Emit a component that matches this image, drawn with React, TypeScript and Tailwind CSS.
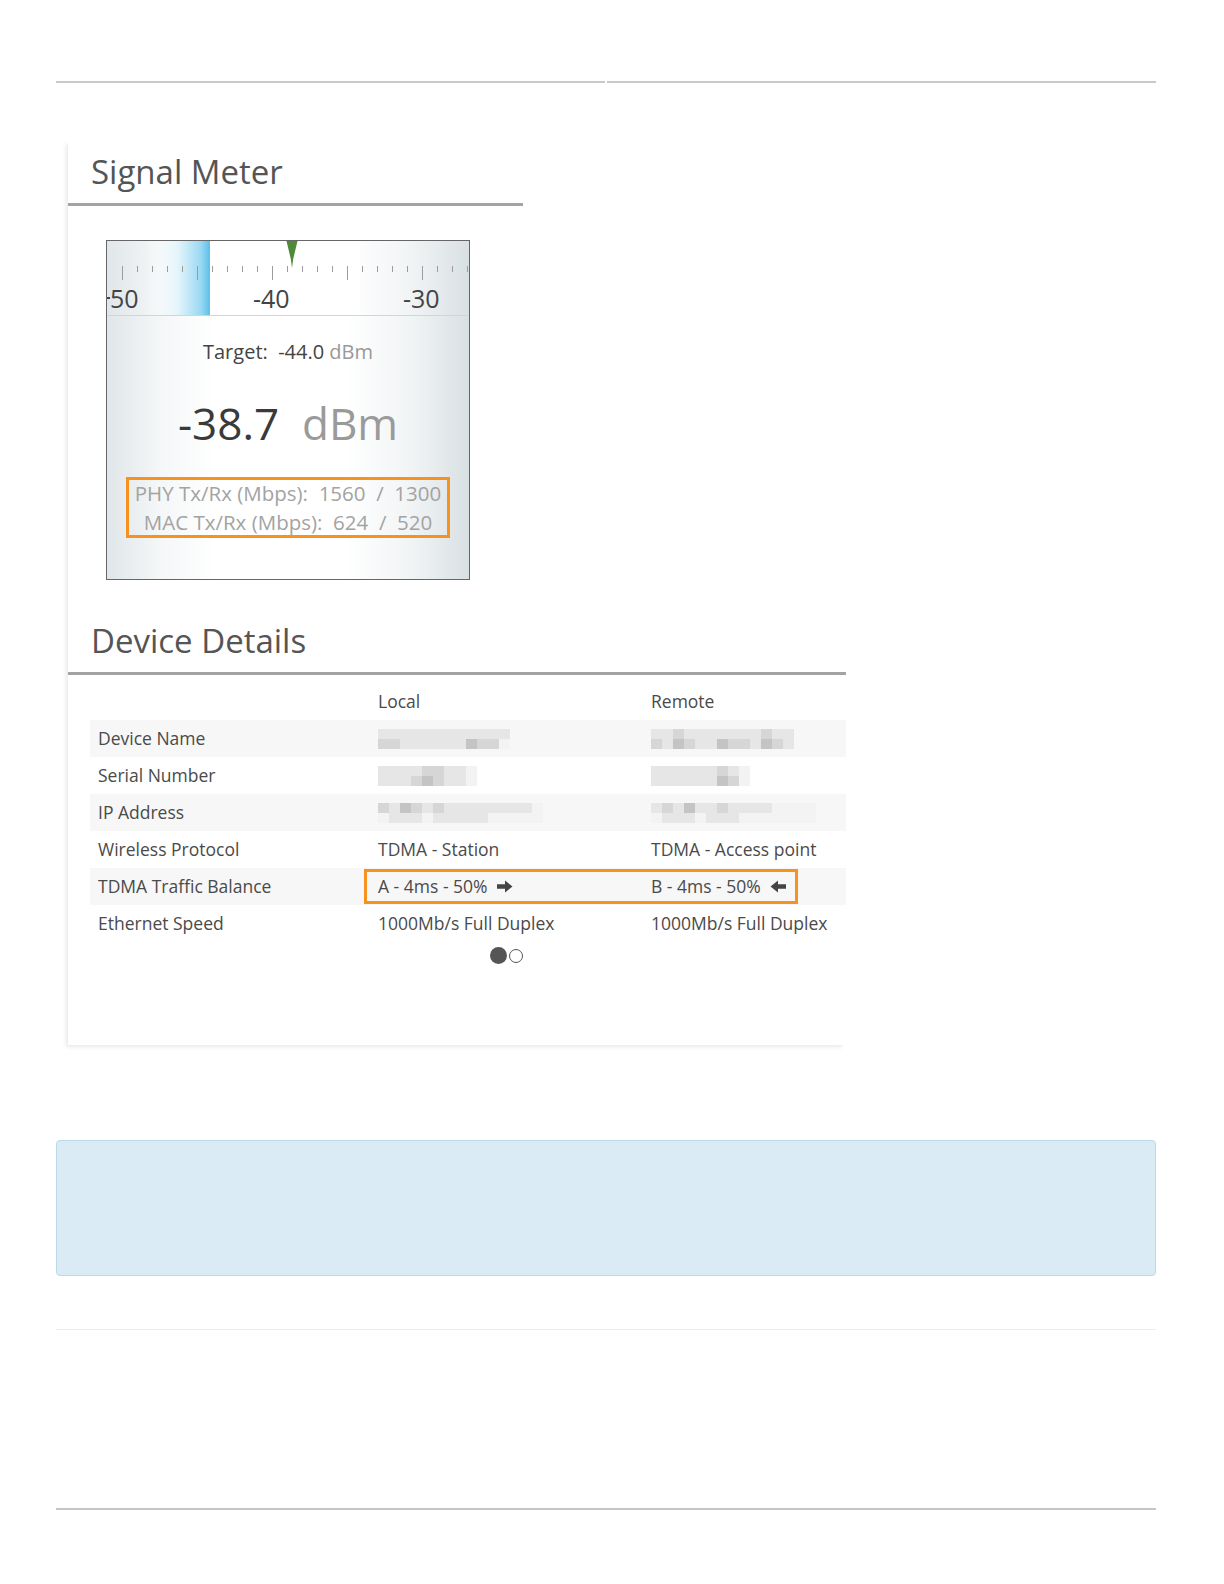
// mosaic shades for the pixelated (redacted) values
const shade: Record<string, string> = {
  a: "bg-[#f3f3f3]",
  b: "bg-[#e6e6e6]",
  c: "bg-[#d6d6d6]",
  d: "bg-[#c4c4c4]",
};

function Mosaic({ rows }: { rows: string[] }) {
  return (
    <div className="flex flex-col blur-[0.7px]">
      {rows.map((row, i) => (
        <div key={i} className="flex">
          {row.split("").map((c, j) => (
            <div key={j} className={`w-[11px] h-[10px] ${shade[c]}`} />
          ))}
        </div>
      ))}
    </div>
  );
}

// heavy short arrow like the font-awesome one in the screenshot
function Arrow({ left }: { left?: boolean }) {
  return (
    <svg width="16" height="13" viewBox="0 0 16 13" className={left ? "rotate-180" : ""}>
      <path d="M0 4.3 H8 V0.5 L15.5 6.5 L8 12.5 V8.7 H0 Z" fill="#444" />
    </svg>
  );
}

function Scale() {
  const ticks = Array.from({ length: 24 }, (_, k) => k);
  return (
    <div className="relative h-[74px]">
      <svg width="362" height="74" className="block">
        <defs>
          <linearGradient id="band" x1="0" x2="1" y1="0" y2="0">
            <stop offset="0" stopColor="#ffffff" stopOpacity="0" />
            <stop offset="0.5" stopColor="#e2f4fb" />
            <stop offset="0.85" stopColor="#9cd9f3" />
            <stop offset="1" stopColor="#5bbfe9" />
          </linearGradient>
        </defs>
        <rect x="40" y="0" width="63" height="74" fill="url(#band)" />
        <rect x="103" y="0" width="150" height="74" fill="#ffffff" />
        {ticks.map((k) => {
          const x = 15 + k * 15;
          const major = k % 5 === 0;
          return (
            <line
              key={k}
              x1={x + 0.5}
              x2={x + 0.5}
              y1={25}
              y2={major ? 39 : 31}
              stroke="#9c9c9c"
              strokeWidth="1"
            />
          );
        })}
        <path d="M179.5 0 H190.5 L186.2 18 L185 27 L183.8 18 Z" fill="#4e8a3a" />
      </svg>
      <span className="absolute left-[3px] top-[42px] text-[25px] leading-[30px] text-[#444]">50</span>
      <span className="absolute left-0 top-[56px] w-[3px] h-[2px] bg-[#444]" />
      <span className="absolute left-[146px] top-[42px] text-[25px] leading-[30px] text-[#444]">-40</span>
      <span className="absolute left-[296px] top-[42px] text-[25px] leading-[30px] text-[#444]">-30</span>
    </div>
  );
}

function SignalMeter() {
  return (
    <div className="mt-[34px] ml-[38px] w-[364px] h-[340px] border border-[#666] bg-[linear-gradient(to_right,#e0e6e9,#f4f6f7_14%,#ffffff_30%,#ffffff_66%,#f1f4f5_84%,#d9e0e3)] flex flex-col">
      <div className="border-b border-[#d4d4d4]">
        <Scale />
      </div>
      <div className="pt-[22px] text-center text-[20px] leading-[28px] text-[#444] whitespace-pre">
        {"Target:  -44.0 "}
        <span className="text-[#999]">dBm</span>
      </div>
      <div className="mt-[29px] text-center text-[44px] leading-[56px] text-[#3a3a3a] whitespace-pre">
        {"-38.7  "}
        <span className="text-[#9a9a9a]">dBm</span>
      </div>
      <div className="mt-[26px] mx-auto w-[324px] h-[61px] border-[3px] border-[#f6931f] flex flex-col justify-center items-center text-[20.5px] leading-[29px] text-[#a3a3a3] whitespace-pre">
        <div>{"PHY Tx/Rx (Mbps):  1560  /  1300"}</div>
        <div>{"MAC Tx/Rx (Mbps):  624  /  520"}</div>
      </div>
    </div>
  );
}

const rows = [
  {
    label: "Device Name",
    local: <Mosaic rows={["bbbbbbbbbbbb", "ccbbbbbbdcca"]} />,
    remote: <Mosaic rows={["bbcbbbbbbbcbb", "cbdcbbdccbdcb"]} />,
  },
  {
    label: "Serial Number",
    local: <Mosaic rows={["bbbbccbba", "bbbcdcbba"]} />,
    remote: <Mosaic rows={["bbbbbbcba", "bbbbbbdca"]} />,
  },
  {
    label: "IP Address",
    local: <Mosaic rows={["cbdcbcbbbbbbbba", "abbbabbbbbaaaaa"]} />,
    remote: <Mosaic rows={["bcbdbbcbbbbaaaa", "abbbabbbaaaaaaa"]} />,
  },
  { label: "Wireless Protocol", local: "TDMA - Station", remote: "TDMA - Access point" },
  {
    label: "TDMA Traffic Balance",
    local: (
      <span className="flex items-center gap-[9px]">
        A - 4ms - 50% <Arrow />
      </span>
    ),
    remote: (
      <span className="flex items-center gap-[9px]">
        B - 4ms - 50% <Arrow left />
      </span>
    ),
    marked: true,
  },
  { label: "Ethernet Speed", local: "1000Mb/s Full Duplex", remote: "1000Mb/s Full Duplex" },
];

function DeviceDetails() {
  return (
    <div className="mt-[8px] ml-[22px] w-[756px] text-[17.5px] text-[#4a4a4a]">
      <div className="grid grid-cols-[280px_273px_1fr] h-[37px] items-center">
        <div />
        <div className="pl-[8px]">Local</div>
        <div className="pl-[8px]">Remote</div>
      </div>
      {rows.map((r, i) => (
        <div
          key={r.label}
          className={`relative grid grid-cols-[280px_273px_1fr] h-[37px] items-center ${i % 2 === 0 ? "bg-[#f7f7f7]" : ""}`}
        >
          <div className="pl-[8px]">{r.label}</div>
          <div className="pl-[8px] flex">{r.local}</div>
          <div className="pl-[8px] flex">{r.remote}</div>
          {r.marked && (
            <div className="absolute left-[274px] top-[1px] w-[434px] h-[35px] border-[3px] border-[#f6931f]" />
          )}
        </div>
      ))}
    </div>
  );
}

export default function App() {
  return (
    <div className="bg-white font-['Open_Sans',sans-serif]">
      <div className="ml-[56px] w-[1100px] pt-[81px] pb-[70px]">
        <div className="flex gap-[2px] h-[2px]">
          <div className="flex-1 bg-[#c9c9c9]" />
          <div className="flex-1 bg-[#c9c9c9]" />
        </div>

        <div className="mt-[57px] ml-[12px] w-[778px] bg-white pb-[81px] shadow-[-3px_3px_4px_-1px_rgba(0,0,0,0.09)]">
          <div className="w-[455px] h-[66px] border-b-[3px] border-[#a3a3a3] flex items-center pl-[23px] text-[33px] text-[#555]">
            Signal Meter
          </div>
          <SignalMeter />

          <div className="mt-[29px] h-[66px] border-b-[3px] border-[#a3a3a3] flex items-center pl-[23px] text-[33px] text-[#555]">
            Device Details
          </div>
          <DeviceDetails />

          <div className="mt-[5px] pl-[422px] flex items-center gap-[2px]">
            <div className="w-[17px] h-[17px] rounded-full bg-[#555]" />
            <div className="w-[14px] h-[14px] rounded-full border-[1.5px] border-[#555]" />
          </div>
        </div>

        <div className="mt-[95px] h-[136px] rounded-[4px] border border-[#bcdbe8] bg-[#dbebf5]" />
        <div className="mt-[53px] h-px bg-[#ececec]" />
        <div className="mt-[178px] h-[2px] bg-[#c6c6c6]" />
      </div>
    </div>
  );
}
